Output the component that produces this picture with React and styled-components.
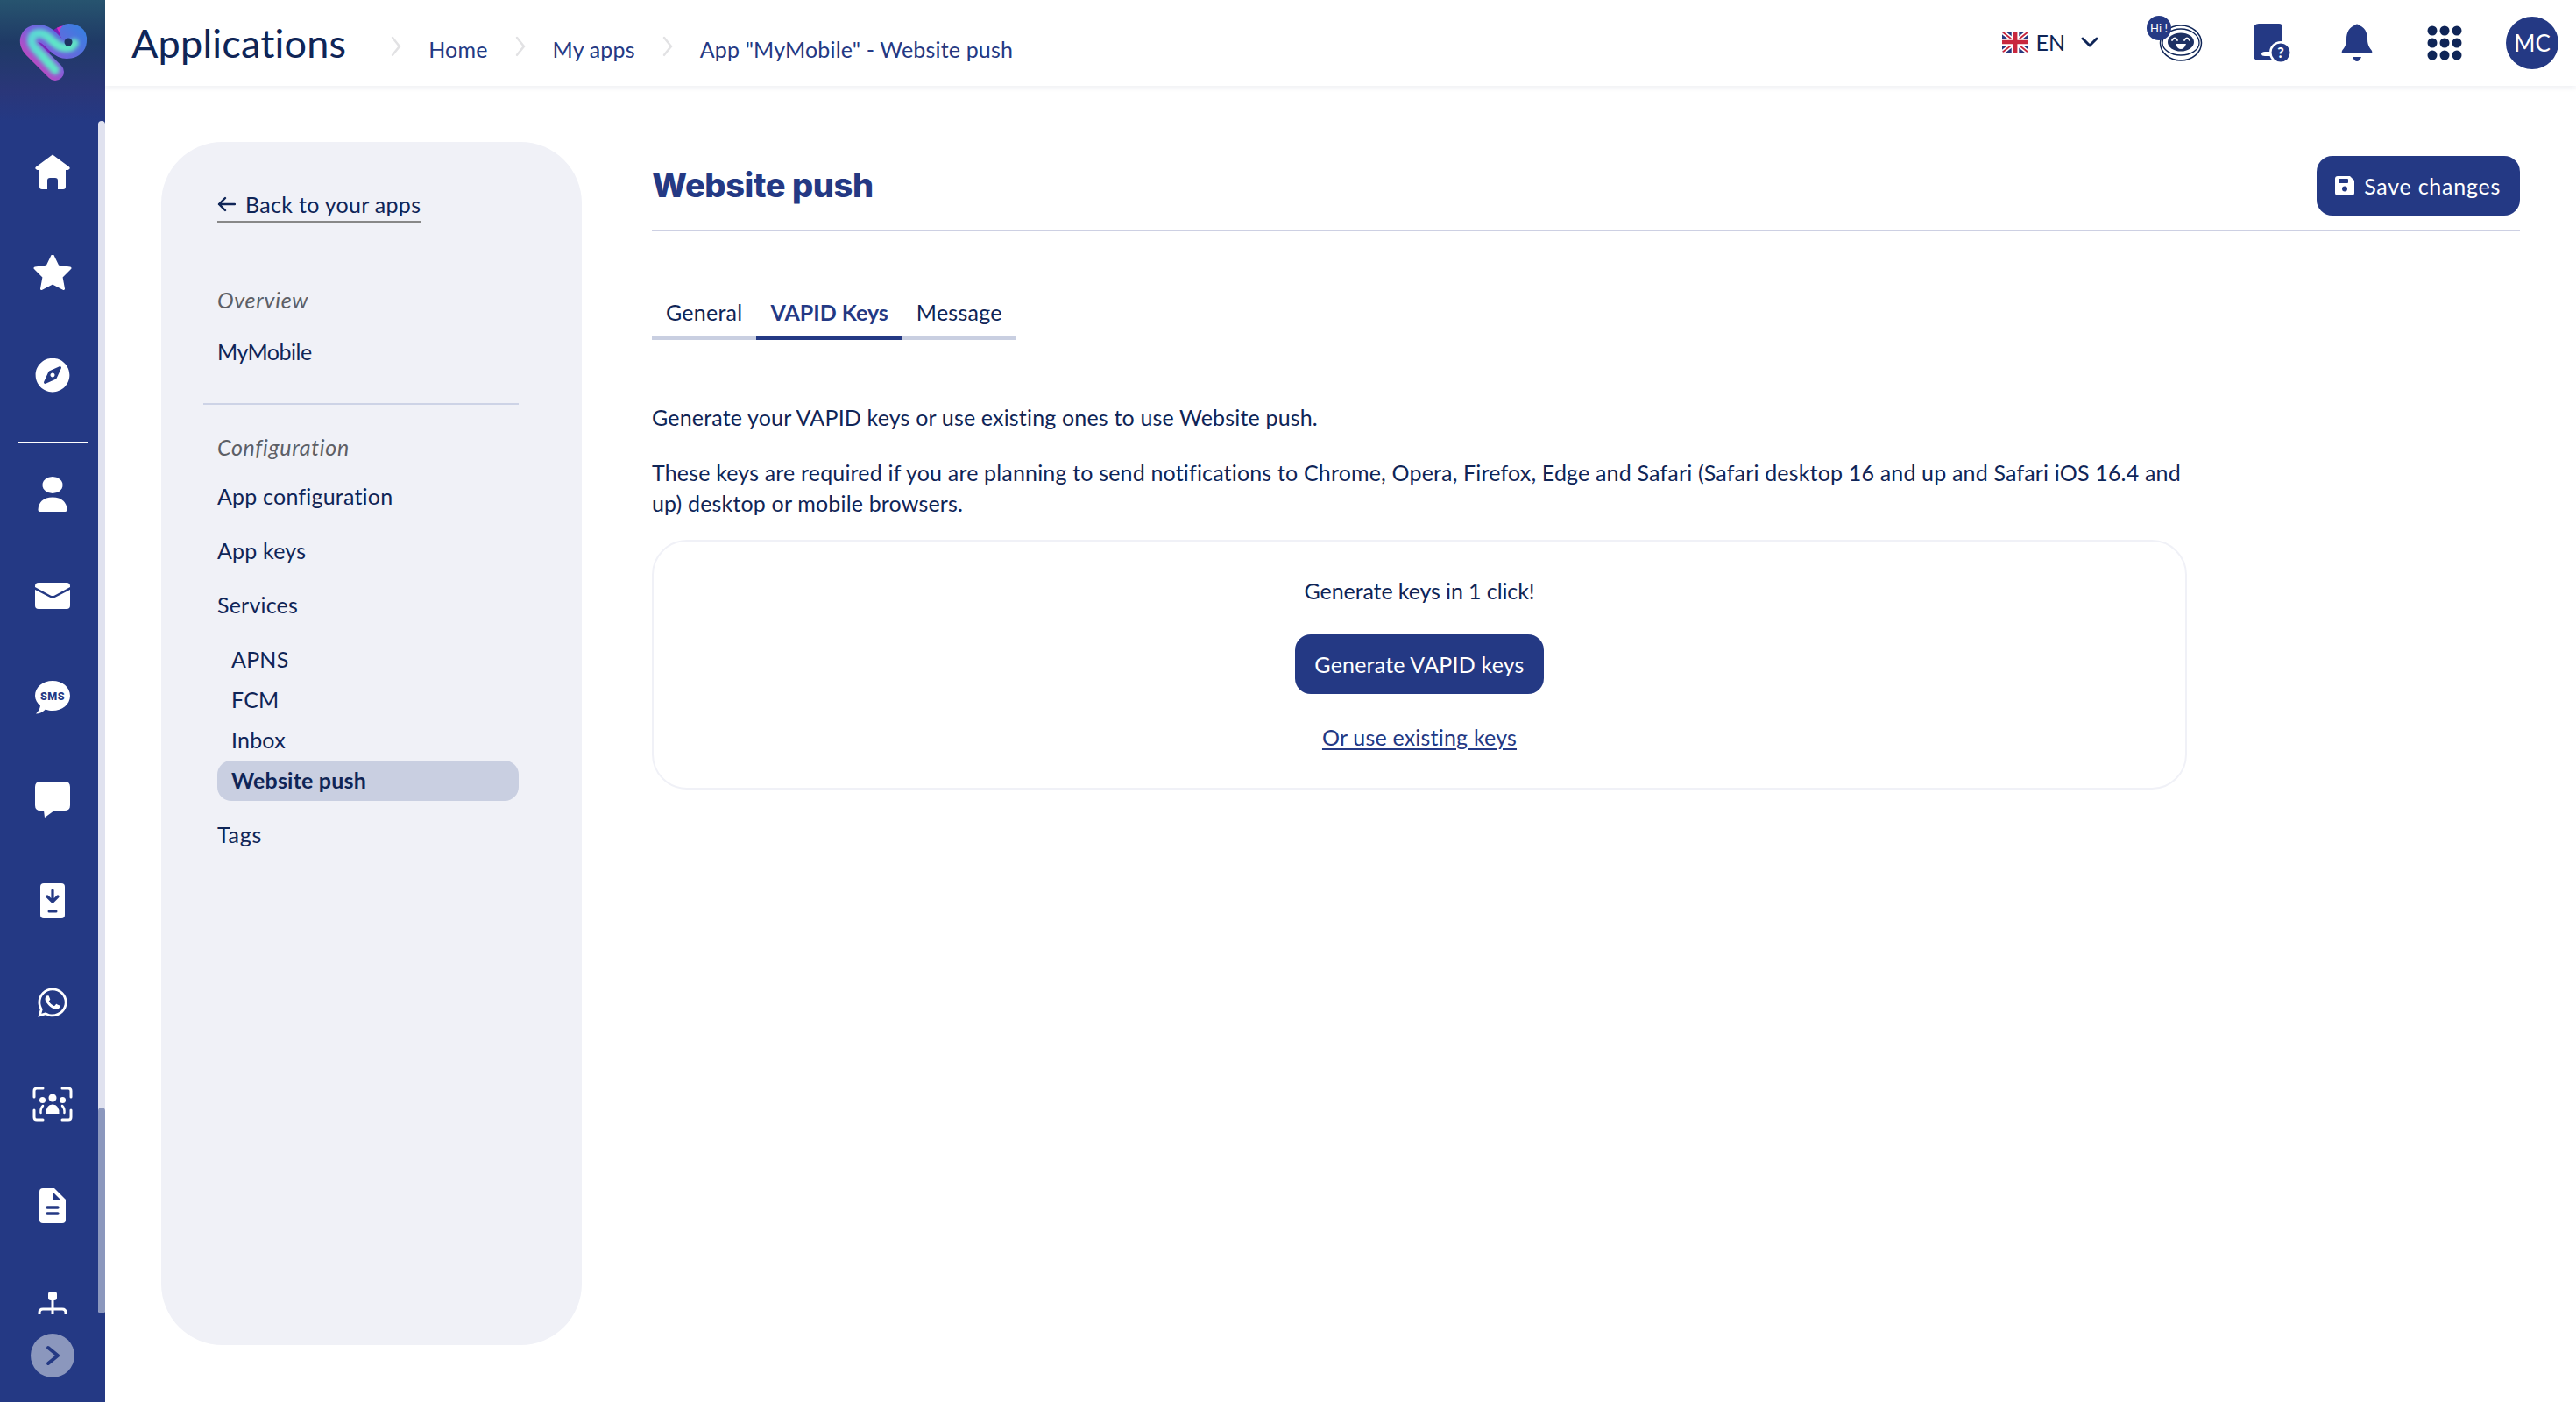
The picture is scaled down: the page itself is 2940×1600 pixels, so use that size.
import React from "react";
import styled, { createGlobalStyle } from "styled-components";
import { FaCompass, FaWhatsapp } from "react-icons/fa";

const NAVY = "#243984";
const INK = "#0f2557";
const FONT = `"Lato", "Noto Sans", sans-serif`;

const Global = createGlobalStyle`
  html, body { margin: 0; padding: 0; background: #fff; overflow: hidden; }
  body { font-family: ${FONT}; color: ${INK}; }
  * { box-sizing: border-box; }
`;

const Shell = styled.div`
  display: flex;
  width: 2940px;
  height: 1600px;
  overflow: hidden;
`;

const Sidebar = styled.aside`
  width: 120px;
  flex: none;
  display: flex;
  flex-direction: column;
  background: ${NAVY};
`;

const LogoBox = styled.div`
  height: 138px;
  flex: none;
  background: linear-gradient(180deg, #27546f 0%, #1f3a66 35%, #2a3679 75%, ${NAVY} 100%);
`;

const NavArea = styled.nav`
  position: relative;
  height: 1362px;
  flex: none;
  overflow: hidden;
`;

const NavItem = styled.div`
  height: 116px;
  width: 120px;
  display: flex;
  align-items: center;
  justify-content: center;
  color: #fff;
`;

const NavRule = styled.div`
  height: 2px;
  margin: 18px 20px 0;
  background: #fff;
`;

const ScrollTrack = styled.div`
  position: absolute;
  top: 0;
  right: 0;
  bottom: 1px;
  width: 8px;
  border-radius: 4px;
  background: #e0e2ef;
  display: flex;
  flex-direction: column;
  justify-content: flex-end;
`;

const ScrollThumb = styled.div`
  height: 235px;
  border-radius: 4px;
  background: #8b97bd;
`;

const ToggleRow = styled.div`
  flex: 1;
  display: flex;
  align-items: flex-start;
  justify-content: center;
  padding-top: 22px;
`;

const Toggle = styled.button`
  width: 50px;
  height: 50px;
  padding: 0;
  border: 0;
  border-radius: 50%;
  background: #8b97bd;
  display: flex;
  align-items: center;
  justify-content: center;
`;

const Column = styled.div`
  flex: 1;
  min-width: 0;
  display: flex;
  flex-direction: column;
`;

const Header = styled.header`
  height: 98px;
  flex: none;
  display: flex;
  align-items: center;
  padding: 0 20px 0 30px;
  background: #fff;
  box-shadow: 0 2px 6px rgba(30, 40, 90, 0.08);
`;

const AppTitle = styled.h1`
  margin: 0;
  font-size: 45px;
  line-height: 60px;
  font-weight: 400;
  letter-spacing: 0.2px;
  color: ${INK};
`;

const Crumbs = styled.div`
  display: flex;
  align-items: center;
  margin: 14px 0 0 50px;
  font-size: 25px;
  letter-spacing: 0.17px;
  color: ${NAVY};
`;

const CrumbSep = styled.span`
  display: flex;
  margin: -6px 30px 0 0;
`;

const Crumb = styled.span`
  margin-right: 30px;
`;

const HeaderRight = styled.div`
  margin-left: auto;
  display: flex;
  align-items: center;
`;

const Lang = styled.div`
  display: flex;
  align-items: center;
  gap: 8px;
  margin: -2px 55px 0 0;
  font-size: 25px;
  color: ${INK};
`;

const Avatar = styled.div`
  width: 60px;
  height: 60px;
  border-radius: 50%;
  background: ${NAVY};
  color: #fff;
  font-size: 26px;
  display: flex;
  align-items: center;
  justify-content: center;
`;

const TopIcon = styled.span`
  display: flex;
  margin-right: ${(p) => p.$gap}px;
`;

const Body = styled.div`
  flex: 1;
  display: flex;
  padding: 64px 64px 65px;
  gap: 80px;
  letter-spacing: 0.2px;
`;

const Panel = styled.div`
  width: 480px;
  flex: none;
  padding: 48px 72px 0 64px;
  border-radius: 70px;
  background: #f0f1f7;
`;

const BackLink = styled.a`
  display: inline-flex;
  align-items: center;
  gap: 11px;
  height: 44px;
  padding-top: 3px;
  border-bottom: 2px solid #888;
  font-size: 25px;
  letter-spacing: 0.3px;
  color: ${INK};
`;

const GroupLabel = styled.div`
  height: 46px;
  margin-top: ${(p) => p.$top}px;
  line-height: 45px;
  font-size: 25px;
  font-style: italic;
  letter-spacing: 0.7px;
  color: #5d5f66;
`;

const PanelItem = styled.div`
  height: 46px;
  margin-top: ${(p) => p.$top}px;
  line-height: 45px;
  font-size: 25px;
  letter-spacing: ${(p) => p.$track ?? 0.2}px;
  color: ${INK};
`;

const SubItem = styled.div`
  height: 46px;
  padding-left: 16px;
  line-height: 45px;
  font-size: 25px;
  border-radius: 16px;
  color: ${INK};
  font-weight: ${(p) => (p.$active ? 700 : 400)};
  background: ${(p) => (p.$active ? "#c9cfe1" : "transparent")};
`;

const SubList = styled.div`
  margin-top: 16px;
`;

const PanelRule = styled.div`
  height: 2px;
  margin: 35px 0 26px -16px;
  background: #cdd3e6;
`;

const Main = styled.main`
  flex: 1;
  min-width: 0;
`;

const TitleRow = styled.div`
  display: flex;
  align-items: center;
  justify-content: space-between;
  padding: 16px 0;
  border-bottom: 2px solid #cdd0e3;
`;

const PageTitle = styled.h2`
  margin: -2px 0 0;
  font-family: "Inter", sans-serif;
  font-size: 38px;
  font-weight: 800;
  letter-spacing: -0.4px;
  color: ${NAVY};
`;

const Button = styled.button`
  height: 68px;
  padding: 0 22px;
  display: inline-flex;
  align-items: center;
  gap: 12px;
  border: 0;
  border-radius: 18px;
  background: ${NAVY};
  color: #fff;
  font-family: ${FONT};
  font-size: 25px;
  letter-spacing: 0.2px;
`;

const SaveButton = styled(Button)`
  padding: 0 22px 0 21px;
  gap: 11px;
  letter-spacing: 0.75px;
`;

const Tabs = styled.div`
  display: flex;
  margin-top: 72px;
`;

const Tab = styled.div`
  height: 52px;
  padding: 0 16px;
  line-height: 40px;
  font-size: 25px;
  letter-spacing: ${(p) => (p.$active ? 0 : 0.25)}px;
  color: ${(p) => (p.$active ? NAVY : INK)};
  font-weight: ${(p) => (p.$active ? 700 : 400)};
  border-bottom: 4px solid ${(p) => (p.$active ? NAVY : "#c9cfe1")};
`;

const Para = styled.p`
  max-width: 1752px;
  margin: ${(p) => p.$top}px 0 0;
  font-size: 25px;
  line-height: 35px;
  letter-spacing: 0.17px;
  color: ${INK};
`;

const Card = styled.div`
  width: 1752px;
  margin-top: 24px;
  padding: 39px 0 40px;
  display: flex;
  flex-direction: column;
  align-items: center;
  border: 2px solid #f0f1f7;
  border-radius: 40px;
`;

const CardText = styled.div`
  font-size: 25px;
  line-height: 35px;
  letter-spacing: -0.1px;
  margin-bottom: 32px;
  color: ${INK};
`;

const CardLink = styled.a`
  margin-top: 32px;
  font-size: 25px;
  line-height: 35px;
  color: ${NAVY};
  text-decoration: underline;
  text-underline-offset: 3px;
`;

const Logo = () => (
  <svg width="130" height="130" viewBox="0 0 130 130" style={{ display: "block" }}>
    <defs>
      <linearGradient id="lgBase" gradientUnits="userSpaceOnUse" x1="30" y1="85" x2="90" y2="30">
        <stop offset="0" stopColor="#e13fb4" />
        <stop offset="0.45" stopColor="#7a5fdc" />
        <stop offset="1" stopColor="#3b7de0" />
      </linearGradient>
      <linearGradient id="lgTop" gradientUnits="userSpaceOnUse" x1="30" y1="40" x2="90" y2="60">
        <stop offset="0" stopColor="#5ad2d8" />
        <stop offset="0.5" stopColor="#5fe6c8" />
        <stop offset="1" stopColor="#62e2c4" />
      </linearGradient>
      <filter id="lgBlur" x="-20%" y="-20%" width="140%" height="140%">
        <feGaussianBlur stdDeviation="2.2" />
      </filter>
    </defs>
    <path d="M80 37C66 36 62 46 46 57" fill="none" stroke="#7a1fb8" strokeWidth="17" />
    <path d="M68 38C72 36 78 36 82 38" fill="none" stroke="#d52fc0" strokeWidth="14" />
    <path
      d="M63 82L37 56C29 48 33 38 44 38C53 38 58 46 65 52C73 60 88 58 89 47C90 39 84 37 78 37"
      fill="none"
      stroke="url(#lgBase)"
      strokeWidth="20"
      strokeLinecap="round"
    />
    <path
      d="M63 80L39 54C33 46 36 38 45 38C53 38 58 46 65 51C72 56 82 56 85 49"
      fill="none"
      stroke="url(#lgTop)"
      strokeWidth="10"
      strokeLinecap="round"
      filter="url(#lgBlur)"
    />
    <circle cx="78" cy="48" r="4.5" fill="#1d3560" />
  </svg>
);

const HomeIcon = () => (
  <svg width="40" height="40" viewBox="0 0 40 40" fill="#fff">
    <path d="M20 0.5L39 14.5Q41 17 37.500 18L35 18L35 37Q35 40 32 40L26 40L26 30Q26 27 23 27L17 27Q14 27 14 30L14 40L8 40Q5 40 5 37L5 18L2.500 18Q-1 17 1 14.500Z" />
  </svg>
);

const StarIcon = () => (
  <svg width="44" height="42" viewBox="0 1.5 44 42" fill="#fff" stroke="#fff" strokeWidth="3" strokeLinejoin="round">
    <path d="M22 2L28 14.500L42 16.500L32 26.500L34.500 40L22 33.500L9.500 40L12 26.500L2 16.500L16 14.500Z" />
  </svg>
);

const PersonIcon = () => (
  <svg width="34" height="40" viewBox="0 0 34 40" fill="#fff">
    <ellipse cx="17" cy="9.500" rx="11.500" ry="9.500" />
    <path d="M0.500 38Q1 24 17 23.500Q33 24 33.500 38Q33.500 40 31.500 40L2.500 40Q0.500 40 0.500 38Z" />
  </svg>
);

const MailIcon = () => (
  <svg width="40" height="30" viewBox="0 0 40 30">
    <rect width="40" height="30" rx="4" fill="#fff" />
    <path d="M-1 6L17 15.500Q20 17 23 15.500L41 6" fill="none" stroke={NAVY} strokeWidth="2.500" />
  </svg>
);

const SmsIcon = () => (
  <svg width="40" height="40" viewBox="0 0 40 40">
    <path d="M20 1C31 1 40 8 40 18C40 28 31 35 20 35C17 35 15 34.500 12 33.500C9 36.500 5 38.500 1 38.500C3.500 36 5.500 33 6 29.500C2.500 26.500 0 22.500 0 18C0 8 9 1 20 1Z" fill="#fff" />
    <text x="20" y="23" textAnchor="middle" fontFamily="Roboto, sans-serif" fontWeight="900" fontSize="12.5" letterSpacing="0.5" fill={NAVY}>SMS</text>
  </svg>
);

const ChatIcon = () => (
  <svg width="40" height="41" viewBox="0 0 40 41" fill="#fff">
    <path d="M6 0L34 0Q40 0 40 6L40 27Q40 33 34 33L22 33L11 41L10 33L6 33Q0 33 0 27L0 6Q0 0 6 0Z" />
  </svg>
);

const InstallIcon = () => (
  <svg width="28" height="40" viewBox="0 0 28 40">
    <rect width="28" height="40" rx="4" fill="#fff" />
    <path d="M14 8V20M8 15L14 21L20 15" fill="none" stroke={NAVY} strokeWidth="3.200" strokeLinecap="round" strokeLinejoin="round" />
    <path d="M10 32H18" stroke={NAVY} strokeWidth="3" strokeLinecap="round" />
  </svg>
);

const GroupIcon = () => (
  <svg width="46" height="40" viewBox="0 0 46 40" fill="#fff">
    <path d="M2 12V5Q2 2 5 2H12M34 2H41Q44 2 44 5V12M44 27V35Q44 38 41 38H34M12 38H5Q2 38 2 35V27" fill="none" stroke="#fff" strokeWidth="3" strokeLinecap="round" />
    <circle cx="23" cy="13" r="4.500" />
    <circle cx="11.500" cy="15.500" r="3.500" />
    <circle cx="34.500" cy="15.500" r="3.500" />
    <path d="M15.500 31Q15 21 23 20.500Q31 21 30.500 31Z" />
    <path d="M12 22Q9 25 9.500 30M34 22Q37 25 36.500 30" fill="none" stroke="#fff" strokeWidth="2.500" strokeLinecap="round" />
  </svg>
);

const DocIcon = () => (
  <svg width="30" height="40" viewBox="0 0 30 40">
    <path d="M4 0L17 0L30 13L30 36Q30 40 26 40L4 40Q0 40 0 36L0 4Q0 0 4 0Z" fill="#fff" />
    <path d="M16 5L25 14L16 14Z" fill={NAVY} />
    <path d="M9 22H21M9 29H21" stroke={NAVY} strokeWidth="3.400" strokeLinecap="round" />
  </svg>
);

const OrgIcon = () => (
  <svg width="36" height="40" viewBox="0 0 36 40" fill="#fff" style={{ marginTop: 4 }}>
    <rect x="13" y="0" width="10" height="10" rx="3" />
    <path d="M18 9V40M3 32V24Q3 20 7 20H29Q33 20 33 24V32" fill="none" stroke="#fff" strokeWidth="3" />
  </svg>
);

const SaveIcon = () => (
  <svg width="22" height="22" viewBox="0 0 22 22">
    <path d="M3 0H17L22 5V19Q22 22 19 22H3Q0 22 0 19V3Q0 0 3 0Z" fill="#fff" />
    <rect x="4" y="3" width="11" height="5" rx="1" fill={NAVY} />
    <circle cx="11" cy="14.500" r="3" fill={NAVY} />
  </svg>
);

const Flag = () => (
  <svg width="30" height="24" viewBox="0 0 28 24" preserveAspectRatio="none" style={{ borderRadius: 3 }}>
    <rect width="28" height="24" fill="#26377e" />
    <path d="M0 0L28 24M28 0L0 24" stroke="#fff" strokeWidth="5" />
    <path d="M0 0L28 24M28 0L0 24" stroke="#c8283e" strokeWidth="1.800" />
    <path d="M14 0V24M0 12H28" stroke="#fff" strokeWidth="8" />
    <path d="M14 0V24M0 12H28" stroke="#c8283e" strokeWidth="4.500" />
  </svg>
);

const Robot = () => (
  <svg width="64" height="52" viewBox="0 0 64 52" style={{ marginTop: -10 }}>
    <ellipse cx="39" cy="31" rx="23.500" ry="20" fill="#fff" stroke={INK} strokeWidth="1.500" />
    <path d="M18 31A21 16 0 0 1 60 31A21 14 0 0 1 18 31" fill="none" stroke={INK} strokeWidth="1.300" />
    <ellipse cx="39" cy="30" rx="15" ry="10.500" fill="#1e3163" />
    <path d="M29 28Q32 23 35 28M43 28Q46 23 49 28" fill="none" stroke="#fff" strokeWidth="1.800" strokeLinecap="round" />
    <path d="M33 32H45Q43 38 39 38Q35 38 33 32Z" fill="#fff" />
    <circle cx="14" cy="14" r="14" fill={NAVY} />
    <text x="14" y="19" textAnchor="middle" fontFamily="Lato, sans-serif" fontSize="13" fill="#fff">Hi !</text>
  </svg>
);

const HelpBook = () => (
  <svg width="42" height="44" viewBox="0 0 42 44">
    <path d="M6 0H29Q33 0 33 4V32H13Q9 32 9 34.500Q9 37 13 37H22V42H6Q0 42 0 36V6Q0 0 6 0Z" fill={NAVY} />
    <circle cx="31" cy="33" r="13" fill="#fff" />
    <circle cx="31" cy="33" r="10.500" fill={NAVY} />
    <text x="31" y="38.500" textAnchor="middle" fontFamily="Lato, sans-serif" fontWeight="900" fontSize="16" fill="#fff">?</text>
  </svg>
);

const Bell = () => (
  <svg width="36" height="44" viewBox="0 0 36 44" fill={NAVY}>
    <circle cx="18" cy="3" r="2.500" />
    <path d="M18 1C27 3 30 10 30 18C30 25 33 28 35 31Q36 34 34 34H2Q0 34 1 31C3 28 6 25 6 18C6 10 9 3 18 1Z" />
    <path d="M13 38H23Q21 43 18 43Q15 43 13 38Z" />
  </svg>
);

const Dots = () => (
  <svg width="40" height="40" viewBox="0 0 40 40" fill={INK}>
    {[6, 20, 34].flatMap((cy) =>
      [6, 20, 34].map((cx) => <ellipse key={`${cx}-${cy}`} cx={cx} cy={cy} rx="5.500" ry="5.500" />)
    )}
  </svg>
);

const Chevron = ({ size = 14, color = "#e2e2e4" }) => (
  <svg width={size} height={size * 1.7} viewBox="0 0 14 24" fill="none" stroke={color} strokeWidth="2.500" strokeLinecap="round">
    <path d="M3 2L11 12L3 22" />
  </svg>
);

export default function App() {
  return (
    <Shell>
      <Global />
      <Sidebar>
        <LogoBox>
          <Logo />
        </LogoBox>
        <NavArea>
          <NavItem><HomeIcon /></NavItem>
          <NavItem><StarIcon /></NavItem>
          <NavItem><FaCompass size={40} /></NavItem>
          <NavRule />
          <NavItem><PersonIcon /></NavItem>
          <NavItem><MailIcon /></NavItem>
          <NavItem><SmsIcon /></NavItem>
          <NavItem><ChatIcon /></NavItem>
          <NavItem><InstallIcon /></NavItem>
          <NavItem><FaWhatsapp size={38} /></NavItem>
          <NavItem><GroupIcon /></NavItem>
          <NavItem><DocIcon /></NavItem>
          <NavItem><OrgIcon /></NavItem>
          <ScrollTrack>
            <ScrollThumb />
          </ScrollTrack>
        </NavArea>
        <ToggleRow>
          <Toggle aria-label="Expand">
            <svg width="20" height="24" viewBox="0 0 20 24" fill="none" stroke={NAVY} strokeWidth="4" strokeLinecap="round" strokeLinejoin="round">
              <path d="M5 3L16 12L5 21" />
            </svg>
          </Toggle>
        </ToggleRow>
      </Sidebar>

      <Column>
        <Header>
          <AppTitle>Applications</AppTitle>
          <Crumbs>
            <CrumbSep><Chevron /></CrumbSep>
            <Crumb>Home</Crumb>
            <CrumbSep><Chevron /></CrumbSep>
            <Crumb>My apps</Crumb>
            <CrumbSep><Chevron /></CrumbSep>
            <Crumb>App "MyMobile" - Website push</Crumb>
          </Crumbs>
          <HeaderRight>
            <Lang>
              <Flag />
              <span>EN</span>
              <svg width="20" height="12" viewBox="0 0 20 12" fill="none" stroke={INK} strokeWidth="3" strokeLinecap="round" strokeLinejoin="round" style={{ marginLeft: 10 }}>
                <path d="M2 2L10 10L18 2" />
              </svg>
            </Lang>
            <TopIcon $gap={58}><Robot /></TopIcon>
            <TopIcon $gap={58}><HelpBook /></TopIcon>
            <TopIcon $gap={62}><Bell /></TopIcon>
            <TopIcon $gap={50}><Dots /></TopIcon>
            <Avatar>MC</Avatar>
          </HeaderRight>
        </Header>

        <Body>
          <Panel>
            <BackLink>
              <svg width="21" height="18" viewBox="0 0 21 18" fill="none" stroke={INK} strokeWidth="2.400" strokeLinecap="round" strokeLinejoin="round">
                <path d="M20 9H2M9 2L2 9L9 16" />
              </svg>
              Back to your apps
            </BackLink>
            <GroupLabel $top={66}>Overview</GroupLabel>
            <PanelItem $top={13} $track={-0.5}>MyMobile</PanelItem>
            <PanelRule />
            <GroupLabel $top={0}>Configuration</GroupLabel>
            <PanelItem $top={10}>App configuration</PanelItem>
            <PanelItem $top={16}>App keys</PanelItem>
            <PanelItem $top={16}>Services</PanelItem>
            <SubList>
              <SubItem>APNS</SubItem>
              <SubItem>FCM</SubItem>
              <SubItem>Inbox</SubItem>
              <SubItem $active>Website push</SubItem>
            </SubList>
            <PanelItem $top={16} $track={0.7}>Tags</PanelItem>
          </Panel>

          <Main>
            <TitleRow>
              <PageTitle>Website push</PageTitle>
              <SaveButton>
                <SaveIcon />
                Save changes
              </SaveButton>
            </TitleRow>
            <Tabs>
              <Tab>General</Tab>
              <Tab $active>VAPID Keys</Tab>
              <Tab>Message</Tab>
            </Tabs>
            <Para $top={71}>Generate your VAPID keys or use existing ones to use Website push.</Para>
            <Para $top={28}>
              These keys are required if you are planning to send notifications to Chrome, Opera, Firefox, Edge and Safari (Safari desktop 16 and up and Safari iOS 16.4 and up) desktop or mobile browsers.
            </Para>
            <Card>
              <CardText>Generate keys in 1 click!</CardText>
              <Button>Generate VAPID keys</Button>
              <CardLink>Or use existing keys</CardLink>
            </Card>
          </Main>
        </Body>
      </Column>
    </Shell>
  );
}
